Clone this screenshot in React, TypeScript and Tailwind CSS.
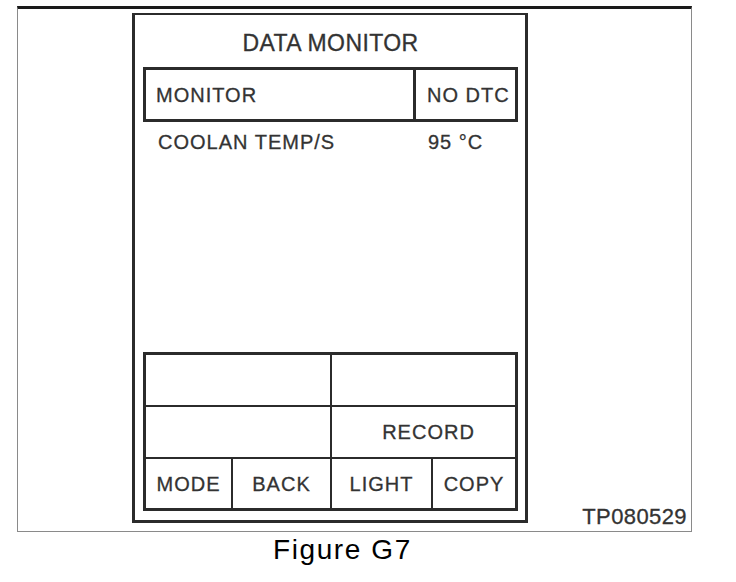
const line = "border-[#2b2b2b]";

function Cell({ children, className = "" }: { children?: React.ReactNode; className?: string }) {
  return (
    <div className={`flex items-center justify-center ${className}`}>
      {children}
    </div>
  );
}

export default function App() {
  return (
    <div className="w-[736px] h-[582px] bg-white font-['Liberation_Sans',Arial,sans-serif] text-[#333] [-webkit-text-stroke:0.3px_#333]">
      {/* figure frame */}
      <div className="ml-[17px] mt-[6px] flex h-[526px] w-[675px] border border-t-[3px] border-[#8a8a8a] border-t-[#1a1a1a]">
        {/* scan tool screen */}
        <div className={`ml-[114px] mt-[4px] flex h-[510px] w-[396px] flex-col border-[3px] border-t-2 ${line}`}>
          <div className="mt-[17px] pl-[1px] text-center text-[23px] leading-[23px] tracking-[0.4px]">DATA MONITOR</div>

          <div className={`ml-[8px] mt-[12px] flex h-[55px] w-[375px] border-[3px] ${line}`}>
            <div className={`flex w-[270px] items-center border-r-[3px] pl-[10px] text-[20px] tracking-[1px] ${line}`}>
              MONITOR
            </div>
            <div className="flex flex-1 items-center pl-[11px] text-[20px] tracking-[1px]">NO DTC</div>
          </div>

          <div className="mt-[10px] flex text-[20px] leading-[20px] tracking-[1px]">
            <div className="w-[293px] pl-[23px]">COOLAN TEMP/S</div>
            <div>95 °C</div>
          </div>

          <div className={`mb-[9px] ml-[8px] mt-auto flex h-[159px] w-[375px] flex-col border-[3px] ${line}`}>
            <div className={`flex h-[52px] border-b-2 ${line}`}>
              <Cell className={`w-[186px] border-r-2 ${line}`} />
              <Cell className="flex-1" />
            </div>
            <div className={`flex h-[52px] border-b-2 ${line}`}>
              <Cell className={`w-[186px] border-r-2 ${line}`} />
              <Cell className="flex-1 pl-[10px] text-[20px] tracking-[1px]">RECORD</Cell>
            </div>
            <div className="flex flex-1 text-[20px] tracking-[1px]">
              <Cell className={`w-[87px] border-r-2 ${line}`}>MODE</Cell>
              <Cell className={`w-[99px] border-r-2 ${line}`}>BACK</Cell>
              <Cell className={`w-[101px] border-r-2 ${line}`}>LIGHT</Cell>
              <Cell className="flex-1">COPY</Cell>
            </div>
          </div>
        </div>

        <div className="flex flex-1 flex-col items-end justify-end pb-[3px] pr-[4px]">
          <div className="text-[22px] leading-[22px] tracking-[0.4px]">TP080529</div>
        </div>
      </div>

      <div className="ml-[273px] mt-[4px] text-[28px] leading-[28px] tracking-[1.6px] text-black [-webkit-text-stroke:0px]">Figure G7</div>
    </div>
  );
}
